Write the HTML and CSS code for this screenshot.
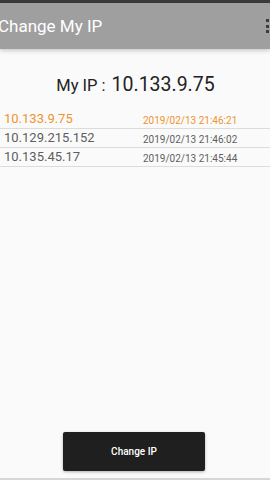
FILE: index.html
```html
<!DOCTYPE html>
<html lang="en">
<head>
  <meta charset="UTF-8" />
  <meta name="viewport" content="width=device-width, initial-scale=1.0" />
  <title>Change My IP</title>
  <link rel="stylesheet" href="styles.css">
</head>
<body>

  <div class="status"></div>

  <header class="appbar">
    <span class="title">Change My IP</span>
    <span class="menu"><i></i><i></i><i></i></span>
  </header>

  <main>
    <p class="myip"><span class="label">My IP :</span> <span class="addr">10.133.9.75</span></p>

    <ul class="history">
      <li class="current"><span class="ip">10.133.9.75</span><span class="time">2019/02/13 21:46:21</span></li>
      <li><span class="ip">10.129.215.152</span><span class="time">2019/02/13 21:46:02</span></li>
      <li><span class="ip">10.135.45.17</span><span class="time">2019/02/13 21:45:44</span></li>
    </ul>
  </main>

  <footer>
    <button type="button" class="change">Change IP</button>
  </footer>

</body>
</html>
```

FILE: styles.css
```css
:root {
  --bar: #9f9f9f;
  --background: #fafafa;
  --text: #222222;
  --muted: #5e5e5e;
  --accent: #f0932f;
  --line: #dcdcdc;
}

* {
  margin: 0;
  padding: 0;
  box-sizing: border-box;
  font-family: Roboto, 'Noto Sans', sans-serif;
}

html, body {
  height: 100%;
  overflow: hidden;
}

body {
  display: flex;
  flex-direction: column;
  background-color: var(--background);
  color: var(--text);
}

.status {
  height: 3px;
  background-color: #3a3a3a;
}

.appbar {
  position: relative;
  display: flex;
  align-items: center;
  justify-content: space-between;
  height: 46px;
  background-color: var(--bar);
  box-shadow: 0 2px 4px rgba(0,0,0,0.18);
  z-index: 1;
}

.title {
  margin-left: -2px;
  color: #ffffff;
  font-size: 17px;
  line-height: 20px;
}

.menu {
  display: flex;
  flex-direction: column;
  gap: 2.5px;
  margin-right: 1px;
}

.menu i {
  display: block;
  width: 3px;
  height: 3px;
  background-color: #3c3c3c;
}

main {
  flex: 1;
}

.myip {
  margin-top: 24px;
  text-align: center;
  line-height: 24px;
  color: var(--text);
  padding-left: 1px;
}

.myip .label {
  font-size: 16.5px;
}

.myip .addr {
  font-size: 19.5px;
  margin-left: 2px;
}

.history {
  list-style: none;
  margin-top: 12px;
}

.history li {
  display: flex;
  align-items: flex-end;
  height: 19px;
  padding: 0 0 1px 4px;
  border-bottom: 1px solid var(--line);
  color: var(--muted);
}

.history .ip {
  width: 139px;
  font-size: 13px;
  line-height: 16px;
}

.history .time {
  font-size: 10px;
  line-height: 13px;
}

.history li.current {
  color: var(--accent);
}

footer {
  display: flex;
  justify-content: center;
  padding: 0 2px 7px 0;
  border-bottom: 2px solid #d6d6d6;
}

.change {
  width: 142px;
  height: 39px;
  background-color: #1f1f1f;
  color: #ffffff;
  border: none;
  border-radius: 2px;
  font-size: 10px;
  font-weight: 500;
  box-shadow: 0 1px 3px rgba(0,0,0,0.3);
}
```
